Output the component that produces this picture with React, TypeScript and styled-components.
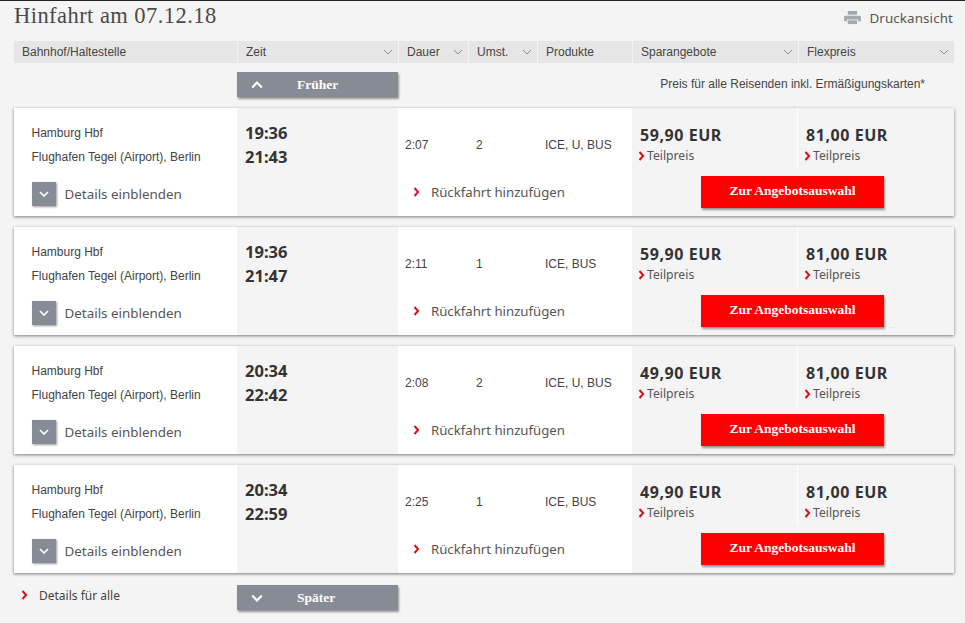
import React from "react";
import styled, { createGlobalStyle } from "styled-components";

const Global = createGlobalStyle`
  html, body { margin: 0; padding: 0; background: #f4f4f4; }
  body { font-family: "Liberation Sans", Arial, sans-serif; color: #333; }
`;
const Page = styled.div`
  width: 965px; height: 623px; box-sizing: border-box; overflow: hidden;
  border-top: 1px solid #222; padding: 0 11px 0 14px; background: #f4f4f4;
`;
const TopBar = styled.div`
  height: 40px; display: flex; justify-content: space-between; align-items: flex-start;
`;
const Title = styled.h1`
  margin: 2px 0 0; font: 400 22.5px/26px "Liberation Serif", serif; letter-spacing: 0.45px; color: #4a4a4a;
`;
const PrintLink = styled.div`
  display: flex; align-items: center; gap: 8px; margin: 7px 1px 0 0; font: 400 13.4px/20px "Noto Sans", sans-serif; color: #555; letter-spacing: 0.1px;
`;
const HeaderRow = styled.div`
  display: grid; grid-template-columns: 223px 160px 69px 68px 94px 165px 155px; column-gap: 1px; height: 22px; width: 940px;
`;
const HeaderCell = styled.div`
  background: #e6e6e6; display: flex; align-items: center; justify-content: space-between;
  padding: 0 5px 0 8px; font-size: 12px; color: #444; svg { color: #8a8d94; }
`;
const SubRow = styled.div`
  display: grid; grid-template-columns: 223px 162px 1fr; height: 45px; width: 940px;
`;
const GreyButton = styled.div<{ $flush?: boolean }>`
  height: 25px; width: 161px; margin-top: ${(p) => (p.$flush ? "1px" : "9px")}; background: #878b96; color: #fff;
  box-shadow: 1px 2px 2px rgba(0,0,0,.4); display: grid; grid-template-columns: 60px 1fr;
  align-items: center; font: 700 13.5px "Liberation Serif", serif;
  svg { margin-left: 14px; }
`;
const PriceNote = styled.div`
  font-size: 12px; color: #444; text-align: right; padding: 14px 29px 0 0;
`;
const Card = styled.div`
  width: 940px; height: 108px; margin-bottom: 11px; background: #fff;
  box-shadow: 0 1px 3px rgba(0,0,0,.5); display: grid; grid-template-columns: 223px 161px 234px 322px;
`;
const StationCol = styled.div`
  padding: 13px 0 0 17.5px; display: flex; flex-direction: column; font-size: 12px; color: #444;
`;
const Station = styled.div` height: 24px; line-height: 24px; `;
const DetailsRow = styled.div`
  display: flex; align-items: center; gap: 8.5px; margin-top: 13px; font: 400 13.4px "Noto Sans", sans-serif; color: #555;
`;
const DetailsBox = styled.div`
  width: 24px; height: 24px; margin-left: .5px; background: #878b96; display: flex; align-items: center; justify-content: center;
  box-shadow: 1px 1px 2px rgba(0,0,0,.4); color: #fff;
`;
const TimeCol = styled.div`
  background: #f4f4f4; padding: 13px 0 0 8px; font: 700 16.5px/24px "Noto Sans", sans-serif; color: #333;
`;
const MiddleCol = styled.div`
  display: grid; grid-template-rows: 72px 1fr; font-size: 12px; color: #444;
`;
const InfoRow = styled.div`
  display: grid; grid-template-columns: 71px 69px 1fr; padding: 29px 0 0 7px; line-height: 16px;
`;
const ReturnLink = styled.div`
  display: flex; align-items: center; gap: 11px; padding: 0 0 0 15px; height: 24px;
  font: 400 13.2px "Noto Sans", sans-serif; color: #555;
`;
const PriceCol = styled.div`
  background: #f4f4f4; display: grid; grid-template-columns: 166px 156px; grid-template-rows: 61px 1fr;
`;
const PriceCell = styled.div<{ $divider?: boolean }>`
  padding: 16px 0 0 8px; border-right: ${(p) => (p.$divider ? "1px solid #fff" : "none")};
  height: 60px; box-sizing: border-box;
`;
const Amount = styled.div`
  font: 700 16px/22px "Noto Sans", sans-serif; letter-spacing: 0.55px; color: #333; height: 22px;
`;
const PartPrice = styled.div`
  display: flex; align-items: center; gap: 2px; margin: 3px 0 0 -2px; font: 400 12.2px/14px "Noto Sans", sans-serif; color: #555;
`;
const OfferRow = styled.div`
  grid-column: 1 / -1; padding-left: 69px;
`;
const OfferButton = styled.div`
  width: 183px; height: 32px; margin-top: 7px; background: #f00; color: #fff;
  font: 700 13.5px/30px "Liberation Serif", serif; text-align: center; box-shadow: 1px 2px 2px rgba(0,0,0,.4);
`;
const Footer = styled.div`
  display: grid; grid-template-columns: 223px 161px; width: 940px;
`;
const AllDetails = styled.div`
  display: flex; align-items: center; gap: 11px; height: 22px; padding-left: 7px;
  font: 400 12px "Noto Sans", sans-serif; color: #444;
`;

const Chevron = ({ dir = "down", size = 10, w = 1.6, color = "currentColor" }: { dir?: "down" | "up"; size?: number; w?: number; color?: string }) => (
  <svg width={size} height={size} viewBox="0 0 10 10" fill="none">
    <path d={dir === "down" ? "M1 3l4 4 4-4" : "M1 7l4-4 4 4"} stroke={color} strokeWidth={w} />
  </svg>
);
const RedArrow = () => (
  <svg width="7" height="10" viewBox="0 0 7 10" fill="none">
    <path d="M1.500 1l3.600 4-3.600 4" stroke="#d8111c" strokeWidth="2" />
  </svg>
);
const Printer = () => (
  <svg width="17" height="14" viewBox="0 0 18 15" fill="#a5a9b2">
    <path d="M4 0h10v4H4z" />
    <path d="M1.500 5h15A1.500 1.500 0 0 1 18 6.500V11h-3V9H3v2H0V6.500A1.500 1.500 0 0 1 1.500 5z" />
    <path d="M4 10h10v4H4z" />
  </svg>
);

const headers: [string, boolean][] = [
  ["Bahnhof/Haltestelle", false], ["Zeit", true], ["Dauer", true], ["Umst.", true],
  ["Produkte", false], ["Sparangebote", true], ["Flexpreis", true],
];
const trips = [
  { dep: "19:36", arr: "21:43", dur: "2:07", ch: "2", prod: "ICE, U, BUS", spar: "59,90 EUR" },
  { dep: "19:36", arr: "21:47", dur: "2:11", ch: "1", prod: "ICE, BUS", spar: "59,90 EUR" },
  { dep: "20:34", arr: "22:42", dur: "2:08", ch: "2", prod: "ICE, U, BUS", spar: "49,90 EUR" },
  { dep: "20:34", arr: "22:59", dur: "2:25", ch: "1", prod: "ICE, BUS", spar: "49,90 EUR" },
];

export default function App() {
  return (
    <Page>
      <Global />
      <TopBar>
        <Title>Hinfahrt am 07.12.18</Title>
        <PrintLink><Printer />Druckansicht</PrintLink>
      </TopBar>
      <HeaderRow>
        {headers.map(([label, sort]) => (
          <HeaderCell key={label}>{label}{sort && <Chevron size={10} w={1} />}</HeaderCell>
        ))}
      </HeaderRow>
      <SubRow>
        <div />
        <GreyButton><Chevron dir="up" size={12} w={1.8} /><span>Früher</span></GreyButton>
        <PriceNote>Preis für alle Reisenden inkl. Ermäßigungskarten*</PriceNote>
      </SubRow>
      {trips.map((t) => (
        <Card key={t.arr}>
          <StationCol>
            <Station>Hamburg Hbf</Station>
            <Station>Flughafen Tegel (Airport), Berlin</Station>
            <DetailsRow><DetailsBox><Chevron size={10} w={1.6} /></DetailsBox>Details einblenden</DetailsRow>
          </StationCol>
          <TimeCol>{t.dep}<br />{t.arr}</TimeCol>
          <MiddleCol>
            <InfoRow><span>{t.dur}</span><span>{t.ch}</span><span>{t.prod}</span></InfoRow>
            <ReturnLink><RedArrow />Rückfahrt hinzufügen</ReturnLink>
          </MiddleCol>
          <PriceCol>
            <PriceCell $divider>
              <Amount>{t.spar}</Amount>
              <PartPrice><RedArrow />Teilpreis</PartPrice>
            </PriceCell>
            <PriceCell>
              <Amount>81,00 EUR</Amount>
              <PartPrice><RedArrow />Teilpreis</PartPrice>
            </PriceCell>
            <OfferRow><OfferButton>Zur Angebotsauswahl</OfferButton></OfferRow>
          </PriceCol>
        </Card>
      ))}
      <Footer>
        <AllDetails><RedArrow />Details für alle</AllDetails>
        <GreyButton $flush><Chevron size={12} w={1.8} /><span>Später</span></GreyButton>
      </Footer>
    </Page>
  );
}
